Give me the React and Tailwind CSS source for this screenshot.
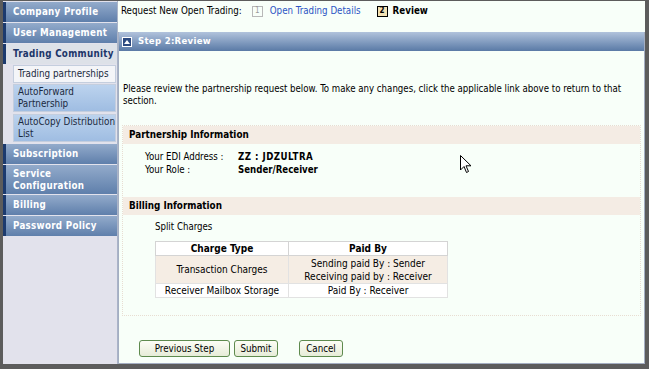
import React from 'react';

const font = { fontFamily: '"DejaVu Sans Condensed", "DejaVu Sans", Tahoma, sans-serif' };

function MenuItem({ children, tall }) {
  return (
    <div
      className={`border-l-[3px] border-[#1c3a6e] bg-gradient-to-b from-[#93abcb] to-[#5f7fab] pl-[7px] text-[9.7px] font-bold leading-[12px] tracking-[0.3px] text-white whitespace-nowrap flex items-center ${tall ? 'h-[29px]' : 'h-[20px]'}`}
    >
      <span>{children}</span>
    </div>
  );
}

function SubItem({ children, active, tall, className = '' }) {
  return (
    <div
      className={`ml-[10px] mr-[1px] border border-[#c4cede] pl-[4px] text-[9.8px] leading-[12px] text-[#1b2a40] whitespace-nowrap flex items-center ${tall ? 'h-[28px]' : 'h-[18px]'} ${active ? 'bg-[#f4f5f8]' : 'bg-gradient-to-b from-[#bcd3ee] to-[#9fbde2]'} ${className}`}
    >
      <span>{children}</span>
    </div>
  );
}

function Cursor() {
  return (
    <svg className="absolute left-[460px] top-[155px]" width="12" height="19" viewBox="0 0 12 19">
      <path d="M0.5 0.5 L0.5 15 L4 11.5 L6.5 17.5 L8.5 16.5 L6 10.8 L11 10.8 Z" fill="#fff" stroke="#000" strokeWidth="1" />
    </svg>
  );
}

function Button({ children, w }) {
  return (
    <button className={`h-[17px] ${w} rounded-[3px] border border-[#5e8a4e] bg-gradient-to-b from-[#fdfdf6] to-[#e6ecd8] text-[9.7px] leading-[12px] text-black`}>
      {children}
    </button>
  );
}

export default function App() {
  return (
    <div style={font} className="relative w-[649px] h-[369px] overflow-hidden bg-[#5c5c5c]">
      <div className="absolute inset-0 pl-[3px] pr-[4px] pb-[5px] pt-px flex">
        {/* sidebar */}
        <div className="w-[114px] bg-[#e2e2ec] flex flex-col gap-px pt-[1px]">
          <MenuItem>Company Profile</MenuItem>
          <MenuItem>User Management</MenuItem>
          <div className="h-[20px] border-l-[3px] border-[#1c3a6e] bg-[#dde1e8] pl-[7px] text-[9.7px] font-bold tracking-[0.3px] text-[#1c3569] whitespace-nowrap flex items-center">
            Trading Community
          </div>
          <div className="flex flex-col pb-px">
            <SubItem active>Trading partnerships</SubItem>
            <SubItem tall className="mt-[1px]">AutoForward<br />Partnership</SubItem>
            <SubItem tall className="mt-[2px]">AutoCopy Distribution<br />List</SubItem>
          </div>
          <MenuItem>Subscription</MenuItem>
          <MenuItem tall>Service<br />Configuration</MenuItem>
          <MenuItem>Billing</MenuItem>
          <MenuItem>Password Policy</MenuItem>
        </div>

        {/* main */}
        <div className="flex-1 flex flex-col bg-[#f8fff9] border-l border-[#aab4c8]">
          <div className="h-[20px] flex items-center pl-[3px] text-[9.7px] text-black">
            <span>Request New Open Trading:</span>
            <span className="ml-[10px] w-[11px] h-[11px] border border-[#b8b8b8] text-[8px] leading-[8px] text-[#9a9a9a] flex items-center justify-center">1</span>
            <span className="ml-[7px] text-[#2c55c4]">Open Trading Details</span>
            <span className="ml-[16px] w-[11px] h-[11px] border border-black bg-[#f3e2b4] text-[8px] leading-[8px] font-bold flex items-center justify-center">2</span>
            <span className="ml-[5px] font-bold">Review</span>
          </div>

          <div className="mt-[11px] flex-1 flex flex-col border-x border-b border-[#a4aec2]">
            <div className="h-[19px] bg-gradient-to-b from-[#b1c3dc] to-[#5a7aa6] flex items-center gap-[6px] pl-[3px] text-[9.5px] font-bold tracking-[0.3px] text-white">
              <span className="w-[10px] h-[10px] border border-white bg-[#2c4a80] flex items-center justify-center">
                <svg width="6" height="4" viewBox="0 0 6 4"><path d="M0 4 L3 0 L6 4 Z" fill="#fff" /></svg>
              </span>
              <span>Step 2:Review</span>
            </div>

            <div className="flex-1 flex flex-col px-[3px] text-[9.6px] text-black">
              <p className="mt-[32px] pl-px leading-[12px]">
                Please review the partnership request below. To make any changes, click the applicable link above to return to that section.
              </p>

              <div className="mt-[18px] h-[191px] border border-dotted border-[#e8ddd2] flex flex-col">
                <div className="h-[18px] bg-[#f4ece4] pl-[6px] flex items-center text-[9.8px] font-bold">Partnership Information</div>
                <div className="pl-[22px] pt-[6px] leading-[13px]">
                  <div className="flex">
                    <span className="w-[93px]">Your EDI Address :</span>
                    <span className="font-bold tracking-[0.5px]">ZZ : JDZULTRA</span>
                  </div>
                  <div className="flex">
                    <span className="w-[93px]">Your Role :</span>
                    <span className="font-bold">Sender/Receiver</span>
                  </div>
                </div>
                <div className="mt-[21px] h-[18px] bg-[#f4ece4] pl-[6px] flex items-center text-[9.8px] font-bold">Billing Information</div>
                <div className="pl-[32px] pt-[5px] leading-[13px]">Split Charges</div>
                <table className="ml-[32px] mt-[8px] w-[293px] border border-[#cfcfcf] text-[10px] leading-[13px] text-center border-collapse">
                  <tbody>
                    <tr className="bg-white">
                      <th className="w-[133px] border border-[#d4d4d4] font-bold h-[13px]">Charge Type</th>
                      <th className="border border-[#d4d4d4] font-bold">Paid By</th>
                    </tr>
                    <tr className="bg-[#f5ede4]">
                      <td className="border border-[#e2e2e2] h-[28px]">Transaction Charges</td>
                      <td className="border border-[#e2e2e2]">Sending paid By : Sender<br />Receiving paid by : Receiver</td>
                    </tr>
                    <tr className="bg-white">
                      <td className="border border-[#e2e2e2] h-[14px]">Receiver Mailbox Storage</td>
                      <td className="border border-[#e2e2e2]">Paid By : Receiver</td>
                    </tr>
                  </tbody>
                </table>
              </div>

              <div className="mt-[24px] pl-[17px] flex items-center">
                <Button w="w-[91px]">Previous Step</Button>
                <span className="w-[4px]" />
                <Button w="w-[44px]">Submit</Button>
                <span className="w-[21px]" />
                <Button w="w-[44px]">Cancel</Button>
              </div>
            </div>
          </div>
        </div>
      </div>
      <Cursor />
    </div>
  );
}
